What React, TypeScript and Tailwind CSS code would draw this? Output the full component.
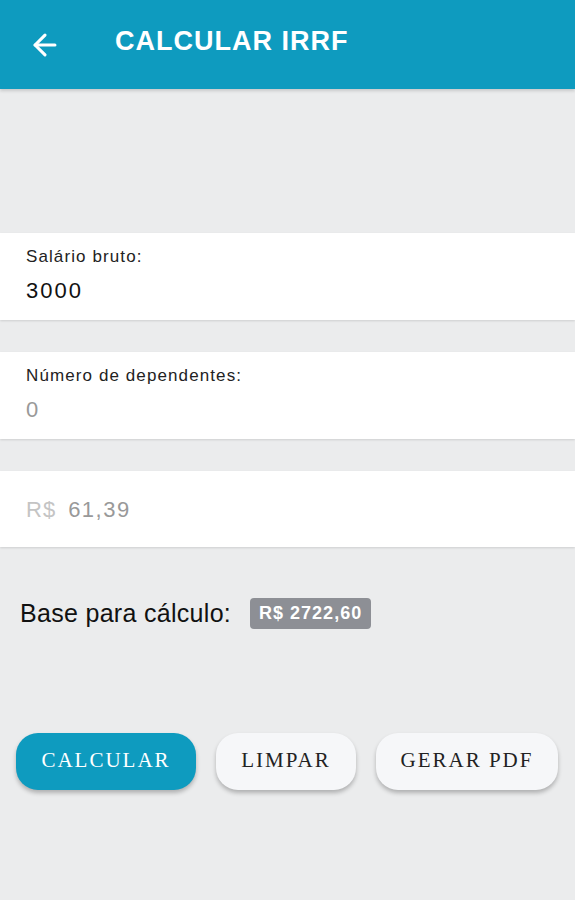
import { ArrowLeft } from "lucide-react";

const fields = [
  { label: "Salário bruto:", value: "3000", muted: false },
  { label: "Número de dependentes:", value: "0", muted: true },
];

const buttons = [
  { text: "CALCULAR", primary: true, width: "w-[180px]" },
  { text: "LIMPAR", primary: false, width: "w-[140px]" },
  { text: "GERAR PDF", primary: false, width: "w-[182px]" },
];

const App = () => {
  return (
    <div className="min-h-[900px] w-[575px] bg-[#ebeced] font-['Liberation_Sans',Arial,sans-serif]">
      <header className="h-[89px] bg-[#0e9bbf] flex items-center shadow-[0_2px_3px_rgba(0,0,0,0.15)]">
        <ArrowLeft className="ml-[28px] text-white" size={34} strokeWidth={2.2} />
        <h1 className="ml-[53px] text-white font-bold text-[27px] tracking-[1px] -mt-[6px]">CALCULAR IRRF</h1>
      </header>

      <div className="mt-[144px] flex flex-col gap-[32px]">
        {fields.map((field, index) => (
          <div key={index} className="h-[87px] bg-white px-[26px] pt-[13px] shadow-[0_1px_2px_rgba(0,0,0,0.12)]">
            <p className="text-[17px] tracking-[1.1px] text-[#222] leading-[22px]">{field.label}</p>
            <p
              className={`mt-[10px] text-[22px] tracking-[2px] leading-[26px] ${
                field.muted ? "text-[#999]" : "text-[#111]"
              }`}
            >
              {field.value}
            </p>
          </div>
        ))}
        <div className="h-[76px] bg-white px-[26px] flex items-center gap-[12px] shadow-[0_1px_2px_rgba(0,0,0,0.12)]">
          <span className="text-[22px] tracking-[1px] text-[#c4c4c4]">R$</span>
          <span className="text-[22px] tracking-[1.5px] text-[#999]">61,39</span>
        </div>
      </div>

      <div className="mt-[48px] ml-[20px] flex items-center gap-[19px]">
        <span className="text-[25px] tracking-[0.3px] text-[#111]">Base para cálculo:</span>
        <span className="bg-[#8d8f95] text-white font-bold text-[18px] tracking-[1px] rounded-[4px] px-[9px] h-[31px] flex items-center">
          R$ 2722,60
        </span>
      </div>

      <div className="mt-[100px] ml-[16px] flex gap-[20px]">
        {buttons.map((btn, index) => (
          <button
            key={index}
            className={`${btn.width} h-[57px] rounded-[22px] font-['Liberation_Serif','Times_New_Roman',serif] text-[21px] tracking-[2px] shadow-[0_3px_4px_rgba(0,0,0,0.25)] ${
              btn.primary ? "bg-[#0e9bbf] text-white" : "bg-[#f6f7f9] text-[#222]"
            }`}
          >
            {btn.text}
          </button>
        ))}
      </div>
    </div>
  );
};

export default App;
